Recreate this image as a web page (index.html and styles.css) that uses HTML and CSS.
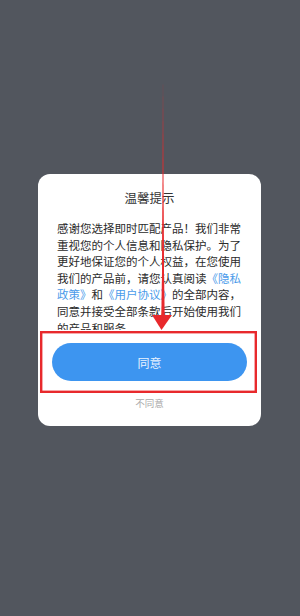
FILE: index.html
```html
<!DOCTYPE html>
<html lang="zh-CN">
  <head>
    <meta charset="UTF-8" />
    <meta name="viewport" content="width=device-width, initial-scale=1.0" />
    <title>温馨提示</title>
    <link rel="stylesheet" href="styles.css">
  </head>
  <body>
    <div class="dialog">
      <h1 class="dialog-title">温馨提示</h1>
      <div class="dialog-body">
        <p>
          感谢您选择即时匹配产品！我们非常重视您的个人信息和隐私保护。为了更好地保证您的个人权益，在您使用我们的产品前，请您认真阅读<a href="#">《隐私政策》</a>和<a href="#">《用户协议》</a>的全部内容，同意并接受全部条款后开始使用我们的产品和服务。
        </p>
      </div>
      <button class="btn-agree">同意</button>
      <div class="btn-refuse">不同意</div>
    </div>

    <!-- annotation drawn on top of the screenshot -->
    <svg class="marker" viewBox="0 0 300 616" width="300" height="616">
      <path d="M163 78 L164.2 316 L161.8 316 Z" fill="#e8292c"></path>
      <path d="M163 200 L164.6 316 L161.4 316 Z" fill="#e8292c"></path>
      <path d="M152 315 L172 315 L161.5 330 Z" fill="#e8292c"></path>
      <rect x="41.2" y="332.2" width="214.6" height="59.6" fill="none" stroke="#e8292c" stroke-width="2.4"></rect>
    </svg>
  </body>
</html>
```

FILE: styles.css
```css
*,
*::before,
*::after {
  box-sizing: border-box;
  margin: 0;
  padding: 0;
}

html,
body {
  height: 100%;
}

body {
  position: relative;
  background-color: #52565e;
  font-family: "Noto Sans CJK SC", "Noto Sans", sans-serif;
  color: #333;
  padding-top: 174px;
  overflow: hidden;
}

.dialog {
  display: flex;
  flex-direction: column;
  align-items: center;
  width: 223px;
  margin-left: 38px;
  padding: 15px 0 16px;
  background-color: #fff;
  border-radius: 12px;
}

.dialog-title {
  font-size: 12.5px;
  font-weight: 400;
  line-height: 17px;
  color: #333;
}

.dialog-body {
  width: 185px;
  height: 110px;
  margin-top: 14px;
  overflow: hidden;
}

.dialog-body p {
  font-size: 11.5px;
  line-height: 16.6px;
  color: #2b2b2b;
}

.dialog-body a {
  color: #4a9bea;
  text-decoration: none;
}

.btn-agree {
  width: 195px;
  height: 38px;
  margin-top: 13px;
  border: 0;
  border-radius: 19px;
  background-color: #3d95f0;
  color: #eaf3ff;
  font-family: inherit;
  font-size: 12px;
}

.btn-refuse {
  margin-top: 16px;
  font-size: 9.5px;
  line-height: 13px;
  color: #aaa;
}

.marker {
  position: absolute;
  top: 0;
  left: 0;
  pointer-events: none;
}
```
